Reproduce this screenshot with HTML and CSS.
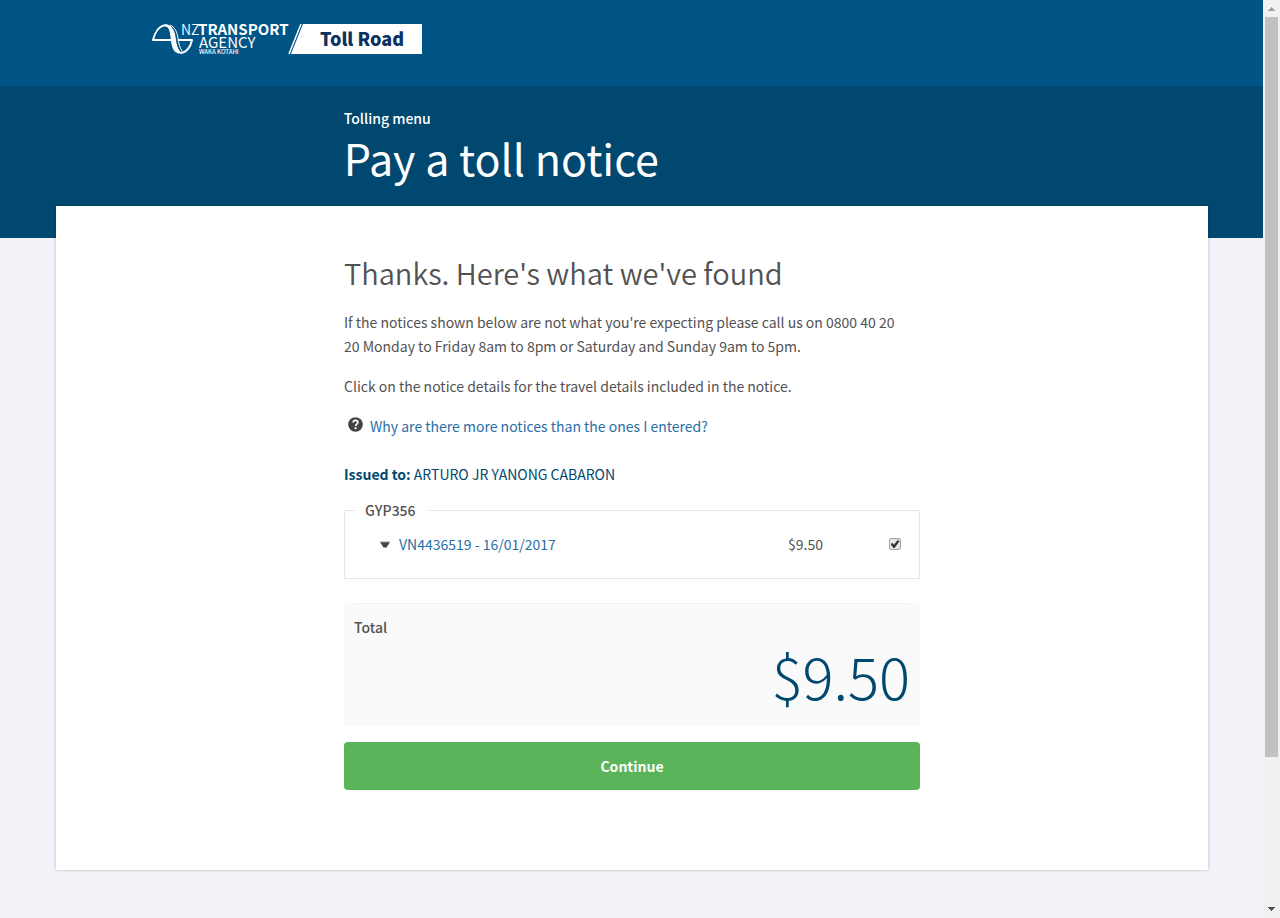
FILE: index.html
```html
<!DOCTYPE html>
<html lang="en">
<head>
<meta charset="utf-8">
<meta name="viewport" content="width=device-width, initial-scale=1">
<title>Pay a toll notice</title>
<link rel="stylesheet" href="styles.css">
</head>
<body>
<div class="frame">
  <div class="page">
    <header class="site-header">
      <div class="header-inner">
        <svg class="logo" viewBox="0 0 270 30" width="270" height="30" role="img" aria-label="NZ Transport Agency Toll Road">
          <path d="M19 16H1C3 8 7.500 1.200 14 1.200M40 16c-1.500 7.500-6 12.800-11 12.800M26.500 16H40" fill="none" stroke="#fff" stroke-width="2" stroke-linecap="round" stroke-linejoin="round"/>
          <path d="M13 .3c7 0 10 6 11 13.700.8 6.500 2 12 6 15.200-7 1.500-10-3.700-11-12.200C18.200 9 17.500 2.500 13 2.200z" fill="#fff"/>
          <path d="M17.500 1c4.500 2.500 6 8 6.700 13.500.8 5.500 1.600 9.500 4.300 12.500" fill="none" stroke="#005486" stroke-width=".8"/>
          <path d="M18 1c5 2 7.200 7.500 8 13 .8 5.500 1.500 9.500 4 13" fill="none" stroke="#fff" stroke-width="1"/>
          <g class="logo-text" fill="#fff">
            <text class="logo-light" x="29" y="11">NZ</text>
            <text class="logo-bold" x="46" y="11">TRANSPORT</text>
            <text class="logo-regular" x="47" y="24">AGENCY</text>
            <text class="logo-small" x="47" y="30">WAKA KOTAHI</text>
          </g>
          <path d="M151 0H270v30H139z" fill="#fff"/>
          <path d="M149 0 137 30" stroke="#fff" stroke-width="1.500"/>
          <text class="logo-product" x="168" y="22">Toll Road</text>
        </svg>
      </div>
    </header>
    <div class="banner">
      <div class="column">
        <a class="menu-link" href="#">Tolling menu</a>
        <h1 class="title">Pay a toll notice</h1>
      </div>
    </div>
    <main class="card">
      <form class="column">
        <h2 class="heading">Thanks. Here's what we've found</h2>
        <p class="para">If the notices shown below are not what you're expecting please call us on 0800 40 20 20 Monday to Friday 8am to 8pm or Saturday and Sunday 9am to 5pm.</p>
        <p class="para">Click on the notice details for the travel details included in the notice.</p>
        <p class="para help">
          <svg class="help-icon" viewBox="0 0 16 16" width="16" height="16" aria-hidden="true">
            <circle cx="7.500" cy="8.500" r="7.300" fill="#444"/>
            <path d="M5.200 6.600C5.200 5.100 6.200 4.300 7.500 4.300s2.300.8 2.300 2.100C9.800 8 7.600 8.100 7.600 10" fill="none" stroke="#fff" stroke-width="1.700"/>
            <circle cx="7.600" cy="12.200" r="1.100" fill="#fff"/>
          </svg>
          <a class="link" href="#">Why are there more notices than the ones I entered?</a>
        </p>
        <p class="issued"><strong class="strong">Issued to:</strong> ARTURO JR YANONG CABARON</p>
        <fieldset class="notices">
          <legend class="plate">GYP356</legend>
          <div class="notice">
            <a class="link notice-link" href="#">
              <svg class="caret" viewBox="0 0 12 8" width="12" height="8" aria-hidden="true"><path d="M1 2h10L7.500 7.500h-3z" fill="#444"/><path d="M1 2h10" stroke="#999"/></svg>
              VN4436519 - 16/01/2017</a>
            <label class="amount" for="notice-1">$9.50</label>
            <input class="tick" type="checkbox" id="notice-1" checked>
          </div>
        </fieldset>
        <section class="total">
          <h3 class="total-label">Total</h3>
          <output class="total-value">$9.50</output>
        </section>
        <button class="continue" type="submit">Continue</button>
      </form>
    </main>
  </div>
  <div class="scrollbar" aria-hidden="true">
    <svg class="arrow" viewBox="0 0 17 17" width="17" height="17"><path d="M8 7h1v1h1v1h1v1h1v1H5v-1h1V9h1V8h1z" fill="#a3a3a3"/></svg>
    <div class="track"><div class="thumb"></div></div>
    <svg class="arrow" viewBox="0 0 17 17" width="17" height="17"><path d="M5 6h7v1h-1v1h-1v1H9v1H8V9H7V8H6V7H5z" fill="#505050"/></svg>
  </div>
</div>
</body>
</html>
```
FILE: styles.css
```css
*, *::before, *::after { box-sizing: border-box; }

body {
  margin: 0;
  background: #f2f3f8;
  color: #525252;
  font-family: "Noto Sans CJK SC", "Noto Sans", sans-serif;
  font-size: 14px;
  font-weight: 400;
  line-height: 24px;
}

.frame { display: flex; min-height: 100vh; }
.page { flex: 1; min-width: 0; padding-bottom: 48px; }

.site-header { background: #005486; padding: 24px 56px 32px; }
.header-inner { padding-left: 96px; }
.logo { display: block; overflow: visible; }
.logo-light { font-size: 14px; font-weight: 350; }
.logo-bold { font-size: 15px; font-weight: 700; }
.logo-regular { font-size: 15px; font-weight: 400; }
.logo-small { font-size: 6px; font-weight: 500; }
.logo-product { font-size: 18px; font-weight: 900; fill: #0b3160; }

.banner { background: #00486f; padding: 20px 56px 54px; }
.column { width: 50%; margin: 0 auto; }
.menu-link { display: block; color: #fff; font-weight: 500; text-decoration: none; }
.title { margin: 0; color: #fff; font-size: 43px; font-weight: 400; line-height: 54px; }

.card {
  margin: -32px 55px 0 56px;
  padding: 48px 0 80px;
  background: #fff;
  box-shadow: 0 0 3px rgba(0, 0, 0, 0.25);
}

.heading { margin: 0 0 20px; font-size: 29px; font-weight: 350; line-height: 36px; }
.para { margin: 0 0 16px; padding-right: 12px; }
.link { color: #2a6ea6; text-decoration: none; }
.help { display: flex; gap: 6px; margin-bottom: 24px; padding-left: 4px; }
.help-icon { margin-top: 2px; }
.issued { margin: 0 0 12px; color: #00486f; }
.strong { font-weight: 700; }

.notices { margin: 0; padding: 10px 18px 22px 10px; border: 1px solid #e6e6e6; }
.plate { padding: 0 12px 0 10px; font-weight: 500; }
.notice { display: flex; align-items: center; padding-left: 24px; }
.notice-link { display: flex; align-items: center; gap: 8px; flex: 1; }
.amount { width: 101px; }
.tick {
  appearance: none;
  display: grid;
  place-items: center;
  width: 12px;
  height: 12px;
  margin: 0;
  border: 1px solid #a3a3a3;
  border-radius: 2px;
  background: #e6e6e6;
}
.tick:checked::before {
  content: "";
  width: 9px;
  height: 8px;
  background: #333;
  clip-path: polygon(0 50%, 22% 38%, 38% 60%, 80% 0, 100% 15%, 45% 100%, 32% 100%);
}

.total { margin: 24px 0 16px; padding: 0 10px 15px; background: #fafafa; }
.total-label { margin: 0; padding-top: 11px; border-top: 1px solid #eee; font-size: 14px; font-weight: 500; }
.total-value { display: block; color: #00486f; font-size: 58px; font-weight: 200; line-height: 72px; text-align: right; }

.continue {
  display: block;
  width: 100%;
  padding: 12px;
  border: 0;
  border-radius: 4px;
  background: #5ab45a;
  color: #fff;
  font: inherit;
  font-weight: 700;
}

.scrollbar { display: flex; flex-direction: column; width: 17px; background: #f1f1f1; }
.arrow { display: block; }
.track { flex: 1; padding: 0 2px; }
.thumb { height: 83.7%; background: #c1c1c1; }
```
